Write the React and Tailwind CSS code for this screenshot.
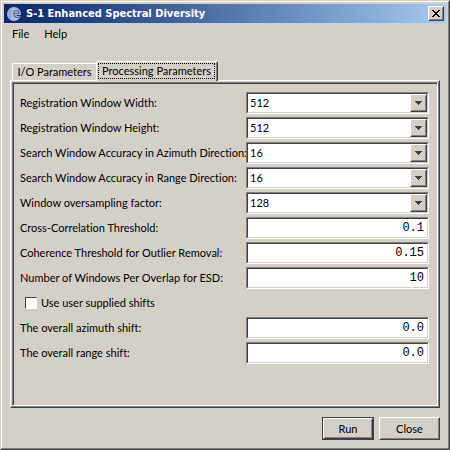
import React, { useState } from "react";

const selects = [
  { id: "reg-width", label: "Registration Window Width:", value: "512" },
  { id: "reg-height", label: "Registration Window Height:", value: "512" },
  { id: "azimuth-accuracy", label: "Search Window Accuracy in Azimuth Direction:", value: "16" },
  { id: "range-accuracy", label: "Search Window Accuracy in Range Direction:", value: "16" },
  { id: "oversampling", label: "Window oversampling factor:", value: "128" },
];

const thresholds = [
  { id: "cross-correlation", label: "Cross-Correlation Threshold:", value: "0.1" },
  { id: "coherence", label: "Coherence Threshold for Outlier Removal:", value: "0.15" },
  { id: "windows-per-overlap", label: "Number of Windows Per Overlap for ESD:", value: "10" },
];

const shifts = [
  { id: "azimuth-shift", label: "The overall azimuth shift:", value: "0.0" },
  { id: "range-shift", label: "The overall range shift:", value: "0.0" },
];

const sunken = "border border-t-[#808080] border-l-[#808080] border-r-white border-b-white";
const sunkenInner = "border border-t-[#404040] border-l-[#404040] border-r-[#d4d0c8] border-b-[#d4d0c8]";
const raised = "border border-t-white border-l-white border-r-[#404040] border-b-[#404040]";
const raisedInner = "border border-t-[#d4d0c8] border-l-[#d4d0c8] border-r-[#808080] border-b-[#808080]";

function Row({ id, label, children }) {
  return (
    <div className="grid grid-cols-[226px_minmax(0,1fr)] items-center">
      <label htmlFor={id} className="whitespace-nowrap">{label}</label>
      <div className={sunken}>
        <div className={`relative h-5 bg-white ${sunkenInner}`}>{children}</div>
      </div>
    </div>
  );
}

function SelectRow({ id, label, value }) {
  return (
    <Row id={id} label={label}>
      <select id={id} defaultValue={value} className="block h-full w-full appearance-none bg-white pl-[2px] outline-none">
        <option>16</option>
        <option>32</option>
        <option>64</option>
        <option>128</option>
        <option>256</option>
        <option>512</option>
      </select>
      <span className={`pointer-events-none absolute inset-y-0 right-0 w-[17px] bg-[#d4d0c8] ${raised}`}>
        <span className={`flex h-full items-center justify-center ${raisedInner}`}>
          <svg width="7" height="4" viewBox="0 0 7 4" shapeRendering="crispEdges">
            <path d="M0 0h7v1h-1v1h-1v1h-1v1h-1v-1h-1v-1h-1v-1h-1z" fill="#404040" />
          </svg>
        </span>
      </span>
    </Row>
  );
}

function TextRow({ id, label, value }) {
  return (
    <Row id={id} label={label}>
      <input id={id} type="text" defaultValue={value} className="block h-full w-full bg-white pr-[3px] text-right font-['Liberation_Mono',monospace] text-xs outline-none" />
    </Row>
  );
}

function AppIcon() {
  return (
    <svg width="16" height="16" viewBox="0 0 16 16" aria-hidden="true">
      <circle cx="8" cy="8" r="7" fill="#a9bad9" />
      <path d="M2 5h4M1 8h4M2 11h4M4 3v10" stroke="#8299c4" fill="none" />
      <path d="M7.500 7.500C7.500 5.500 9 4.500 10.500 4.500S13 6 13 7.500H8C8 10 9.500 11.500 11.500 11.500S14 11 15 10" stroke="#4a66a2" strokeWidth="1.200" fill="none" />
      <path d="M10 9h6v1h-5z" fill="#17337a" />
    </svg>
  );
}

export default function App() {
  const [tab, setTab] = useState("processing");
  return (
    <div className="min-h-screen border border-t-[#d4d0c8] border-r-[#404040] border-b-[#404040] border-l-[#d4d0c8] bg-[#d4d0c8] font-[Lato,sans-serif] text-[11px] leading-[14px] [font-variant-ligatures:none] text-black flex">
      <div className="flex w-full flex-col border border-t-white border-r-[#808080] border-b-[#808080] border-l-white p-[2px]">
        <header className="flex h-[19px] items-center bg-linear-to-r from-[#0a246a] to-[#a6caf0] pr-[2px] pl-[2px]">
          <AppIcon />
          <h1 className="ml-1 flex-1 whitespace-nowrap font-['DejaVu_Sans_Condensed',sans-serif] text-[11px] font-bold text-white">S-1 Enhanced Spectral Diversity</h1>
          <button type="button" aria-label="Close window" className={`h-[15px] w-4 bg-[#d4d0c8] ${raised}`}>
            <span className={`flex h-full items-center justify-center ${raisedInner}`}>
              <svg width="8" height="7" viewBox="0 0 8 7" shapeRendering="crispEdges">
                <path d="M0 0h2v1h1v1h2v-1h1v-1h2v1h-1v1h-1v1h-1v1h1v1h1v1h1v1h-2v-1h-1v-1h-2v1h-1v1h-2v-1h1v-1h1v-1h1v-1h-1v-1h-1v-1h-1z" />
              </svg>
            </span>
          </button>
        </header>

        <nav className="flex gap-[15px] px-2 pt-1">
          <button type="button">File</button>
          <button type="button">Help</button>
        </nav>

        <main className="flex flex-1 flex-col px-[6px] pt-5 pb-[6px]">
          <div role="tablist" className="relative -mb-px flex items-end pl-[2px]">
            <button type="button" role="tab" aria-selected={tab === "io"} onClick={() => setTab("io")} className="mb-px h-[17px] w-[84px] whitespace-nowrap rounded-tl-[2px] border-t border-l border-white">
              I/O Parameters
            </button>
            <button type="button" role="tab" aria-selected={tab === "processing"} onClick={() => setTab("processing")} className="h-5 w-[122px] rounded-t-[2px] border-t border-r border-l border-t-white border-r-[#404040] border-l-white bg-[#d4d0c8]">
              <span className="flex h-full border-r border-[#808080] p-px pb-[2px]">
                <span className="flex w-full items-center justify-center whitespace-nowrap border border-dotted border-black">Processing Parameters</span>
              </span>
            </button>
          </div>

          <section role="tabpanel" className={`flex flex-1 flex-col ${raised}`}>
            <div className={`flex flex-1 flex-col ${raisedInner}`}>
              <div className={`flex flex-1 flex-col ${sunken}`}>
                <div className="flex flex-1 flex-col gap-[3px] border-t border-l border-[#404040] pt-2 pr-2 pb-9 pl-[6px]">
                  {selects.map((f) => <SelectRow key={f.id} {...f} />)}
                  {thresholds.map((f) => <TextRow key={f.id} {...f} />)}
                  <label className="flex h-[22px] items-center gap-1 pl-[5px]">
                    <input type="checkbox" className="h-3 w-3 appearance-none border border-t-[#404040] border-l-[#404040] border-r-white border-b-white bg-white checked:bg-[#404040]" />
                    Use user supplied shifts
                  </label>
                  {shifts.map((f) => <TextRow key={f.id} {...f} />)}
                </div>
              </div>
            </div>
          </section>

          <footer className="flex justify-end gap-[5px] pt-[9px]">
            <button type="button" className="h-[23px] w-[52px] border border-[#404040]">
              <span className={`block h-full ${raised}`}>
                <span className={`flex h-full items-center justify-center ${raisedInner}`}>Run</span>
              </span>
            </button>
            <button type="button" className={`h-[23px] w-[61px] ${raised}`}>
              <span className={`flex h-full items-center justify-center ${raisedInner}`}>Close</span>
            </button>
          </footer>
        </main>
      </div>
    </div>
  );
}
